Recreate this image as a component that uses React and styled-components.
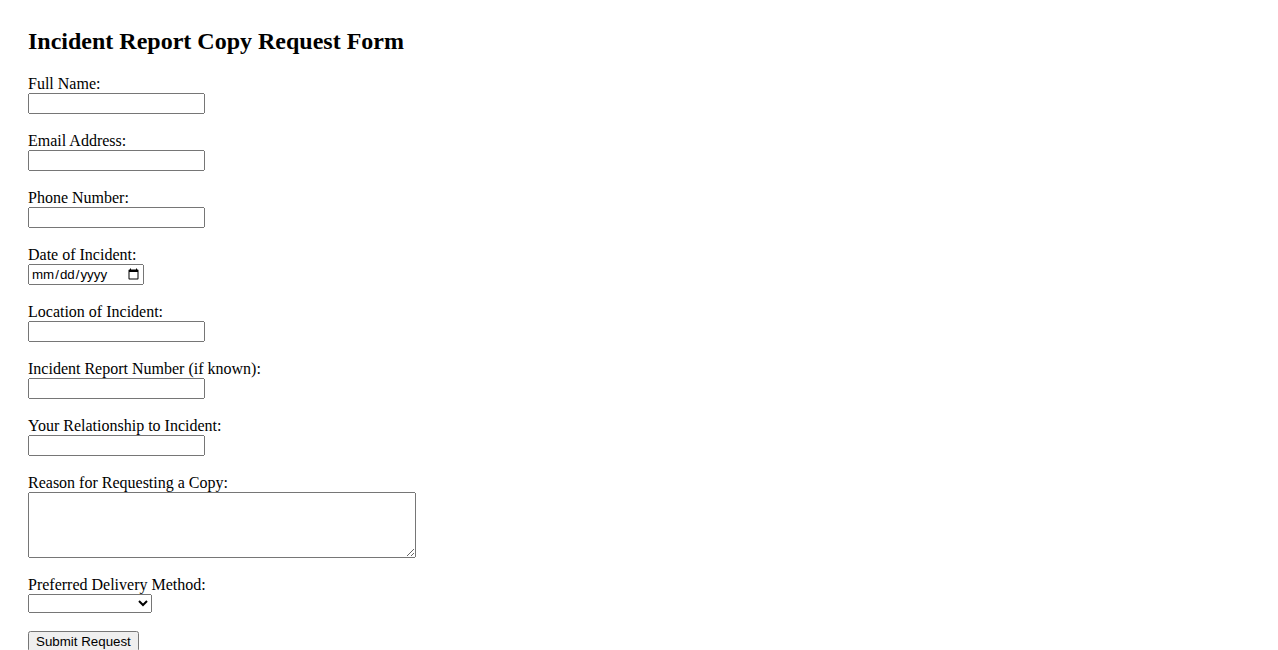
import React from 'react';
import styled, { createGlobalStyle } from 'styled-components';

const GlobalStyle = createGlobalStyle`
  body {
    margin: 0;
    background: #fff;
    color: #000;
    font-family: 'Liberation Serif', 'Times New Roman', serif;
    font-size: 16px;
  }
`;

const Page = styled.div`
  padding: 27px 28px 28px;
`;

const Title = styled.h2`
  margin: 0 0 20px;
  font-size: 24px;
  font-weight: bold;
  line-height: 28px;
`;

const Form = styled.form`
  display: flex;
  flex-direction: column;
  align-items: flex-start;
`;

const Field = styled.div`
  display: flex;
  flex-direction: column;
  align-items: flex-start;
  margin-bottom: 18px;
`;

const Label = styled.label`
  display: block;
  line-height: 18px;
  height: 18px;
`;

const controlBase = `
  box-sizing: border-box;
  margin: 0;
  font-family: 'Liberation Sans', Arial, sans-serif;
  font-size: 13.333px;
`;

const TextInput = styled.input`
  ${controlBase}
  width: ${(p) => p.$width || 177}px;
  height: 21px;
`;

const TextArea = styled.textarea`
  ${controlBase}
  width: 388px;
  height: 66px;
  font-family: 'Liberation Mono', monospace;
`;

const Select = styled.select`
  ${controlBase}
  width: 124px;
  height: 19px;
`;

const Button = styled.button`
  ${controlBase}
  height: 21px;
  padding: 1px 6px;
`;

const fields = [
  { id: 'name', label: 'Full Name:', type: 'text' },
  { id: 'email', label: 'Email Address:', type: 'email' },
  { id: 'phone', label: 'Phone Number:', type: 'tel' },
  { id: 'date', label: 'Date of Incident:', type: 'date', width: 116 },
  { id: 'location', label: 'Location of Incident:', type: 'text' },
  { id: 'report', label: 'Incident Report Number (if known):', type: 'text' },
  { id: 'relation', label: 'Your Relationship to Incident:', type: 'text' },
];

export default function App() {
  return (
    <Page>
      <GlobalStyle />
      <Title>Incident Report Copy Request Form</Title>
      <Form onSubmit={(e) => e.preventDefault()}>
        {fields.map((f) => (
          <Field key={f.id}>
            <Label htmlFor={f.id}>{f.label}</Label>
            <TextInput id={f.id} type={f.type} $width={f.width} />
          </Field>
        ))}
        <Field>
          <Label htmlFor="reason">Reason for Requesting a Copy:</Label>
          <TextArea id="reason" rows={4} />
        </Field>
        <Field>
          <Label htmlFor="delivery">Preferred Delivery Method:</Label>
          <Select id="delivery" defaultValue="">
            <option value=""></option>
            <option value="email">Email</option>
            <option value="mail">Mail</option>
            <option value="pickup">Pick Up</option>
          </Select>
        </Field>
        <Button type="submit">Submit Request</Button>
      </Form>
    </Page>
  );
}
